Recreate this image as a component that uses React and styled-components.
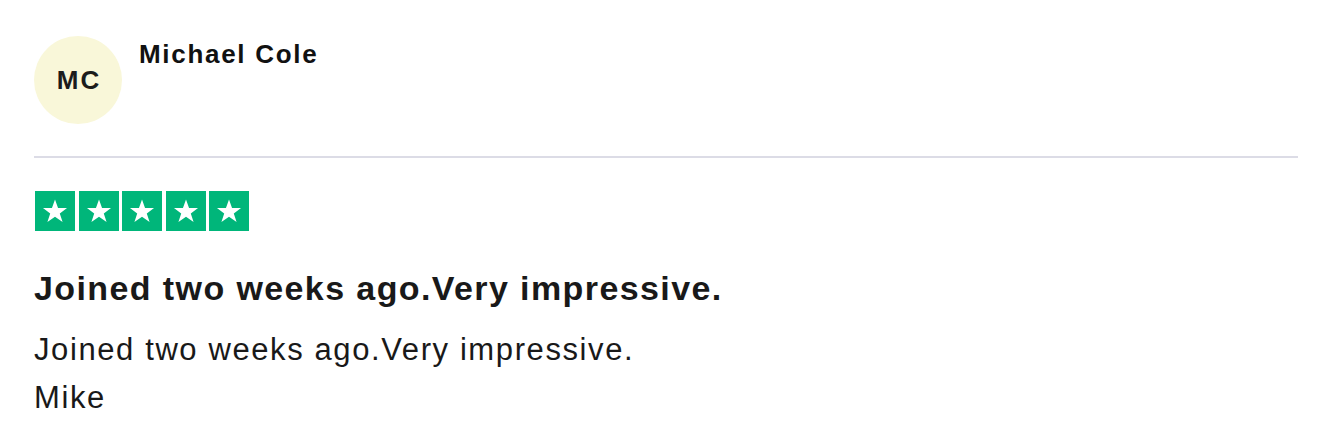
import styled, { createGlobalStyle } from "styled-components";

const GlobalStyle = createGlobalStyle`
  body {
    margin: 0;
    background: #ffffff;
    font-family: "Liberation Sans", Arial, sans-serif;
    color: #191919;
  }
`;

export default function App() {
  return (
    <>
      <GlobalStyle />
      <Card>
        <Header>
          <Avatar>MC</Avatar>
          <Name>Michael Cole</Name>
        </Header>
        <Divider />
        <Stars>
          {[0, 1, 2, 3, 4].map((i) => (
            <StarBox key={i}>
              <svg width="28" height="28" viewBox="0 0 24 24">
                <path
                  d="M12 2.2l2.6 7.3h7.7l-6.2 4.6 2.4 7.4L12 16.9l-6.5 4.6 2.4-7.4L1.7 9.5h7.7z"
                  fill="#ffffff"
                />
              </svg>
            </StarBox>
          ))}
        </Stars>
        <Title>Joined two weeks ago.Very impressive.</Title>
        <Body>
          Joined two weeks ago.Very impressive.
          <br />
          Mike
        </Body>
      </Card>
    </>
  );
}

const Card = styled.div`
  padding: 36px 39px 0 34px;
`;

const Header = styled.div`
  display: flex;
  align-items: flex-start;
  gap: 17px;
`;

const Avatar = styled.div`
  width: 88px;
  height: 88px;
  border-radius: 50%;
  background: #f9f7d9;
  display: flex;
  align-items: center;
  justify-content: center;
  box-sizing: border-box;
  padding-left: 2px;
  font-weight: 700;
  font-size: 26px;
  letter-spacing: 2px;
  color: #1c1c1c;
  flex-shrink: 0;
`;

const Name = styled.div`
  font-weight: 700;
  font-size: 26px;
  letter-spacing: 1.7px;
  color: #111111;
  margin-top: 3px;
`;

const Divider = styled.div`
  height: 2px;
  background: #dcdce6;
  margin-top: 32px;
`;

const Stars = styled.div`
  display: flex;
  gap: 3.5px;
  margin-top: 33px;
  padding-left: 1px;
`;

const StarBox = styled.div`
  width: 40px;
  height: 40px;
  background: #00b67a;
  display: flex;
  align-items: center;
  justify-content: center;
`;

const Title = styled.h2`
  margin: 36px 0 0;
  font-size: 34px;
  font-weight: 700;
  letter-spacing: 1.4px;
  line-height: 42px;
  color: #191919;
`;

const Body = styled.p`
  margin: 17px 0 0;
  font-size: 31px;
  letter-spacing: 1.6px;
  line-height: 48px;
  color: #191919;
`;
